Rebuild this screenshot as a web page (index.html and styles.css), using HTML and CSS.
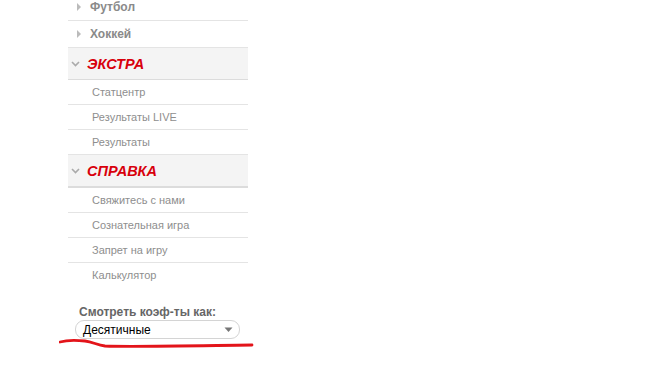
FILE: index.html
```html
<!DOCTYPE html>
<html lang="ru">
<head>
    <meta charset="UTF-8">
    <title>Меню</title>
    <link rel="stylesheet" href="styles.css">
</head>
<body>
    <div class="sidebar">
        <!-- виды спорта -->
        <ul class="sports">
            <li class="sport"><span class="tri"></span>Футбол</li>
            <li class="sport"><span class="tri"></span>Хоккей</li>
        </ul>
        <!-- экстра -->
        <div class="group-head">
            <svg class="chev" width="9" height="6" viewBox="0 0 9 6"><path d="M1 1 L4.5 4.5 L8 1" fill="none" stroke="#aaa" stroke-width="1.6"/></svg>
            ЭКСТРА
        </div>
        <ul class="links">
            <li>Статцентр</li>
            <li>Результаты LIVE</li>
            <li>Результаты</li>
        </ul>
        <!-- справка -->
        <div class="group-head group-head-help">
            <svg class="chev" width="9" height="6" viewBox="0 0 9 6"><path d="M1 1 L4.5 4.5 L8 1" fill="none" stroke="#aaa" stroke-width="1.6"/></svg>
            СПРАВКА
        </div>
        <ul class="links">
            <li>Свяжитесь с нами</li>
            <li>Сознательная игра</li>
            <li>Запрет на игру</li>
            <li class="last">Калькулятор</li>
        </ul>
        <!-- формат коэффициентов -->
        <div class="odds">
            <div class="odds-label">Смотреть коэф-ты как:</div>
            <div class="select">
                <span>Десятичные</span>
                <svg width="9" height="6" viewBox="0 0 9 6"><path d="M0.5 0.5 H8.5 L4.5 5 Z" fill="#777"/></svg>
            </div>
        </div>
    </div>
    <svg class="scribble" width="200" height="14" viewBox="0 0 200 14">
        <path d="M1 4 C8 2, 16 2, 26 3 C34 4, 38 7, 46 8 C70 9, 120 8, 193 7" fill="none" stroke="#e3141a" stroke-width="2.8" stroke-linecap="round"/>
    </svg>
</body>
</html>
```

FILE: styles.css
```css
/* общие */
body {
    margin: 0;
    background: #fff;
    font-family: 'Liberation Sans', Arial, sans-serif;
    position: relative;
    min-height: 368px;
}
ul {
    list-style: none;
    margin: 0;
    padding: 0;
}
.sidebar {
    width: 180px;
    margin: -6px 0 0 68px;
}
/* виды спорта */
.sport {
    height: 26px;
    line-height: 26px;
    border-bottom: 1px solid #e4e4e4;
    font-size: 12px;
    font-weight: bold;
    color: #8a8a8a;
    padding-left: 9px;
    display: flex;
    align-items: center;
}
.tri {
    width: 0;
    height: 0;
    border-left: 4px solid #bbb;
    border-top: 4px solid transparent;
    border-bottom: 4px solid transparent;
    margin-right: 9px;
}
/* заголовки групп */
.group-head {
    height: 31px;
    background: #f4f4f4;
    border-bottom: 1px solid #dcdcdc;
    display: flex;
    align-items: center;
    padding-left: 3px;
    font-size: 14.5px;
    font-weight: bold;
    font-style: italic;
    color: #d8000c;
}
.group-head-help {
    border-bottom-width: 2px;
}
.chev {
    margin-right: 7px;
}
/* ссылки */
.links li {
    height: 24px;
    line-height: 24px;
    border-bottom: 1px solid #e4e4e4;
    font-size: 11px;
    color: #8e8e8e;
    padding-left: 24px;
}
.links li.last {
    border-bottom: none;
}
/* коэффициенты */
.odds {
    margin-top: 18px;
    padding-left: 7px;
}
.odds-label {
    font-size: 12px;
    font-weight: bold;
    color: #666;
    line-height: 14px;
    margin-left: 4px;
}
.select {
    margin-top: 1px;
    height: 17px;
    border: 1px solid #d4d4d4;
    border-radius: 9px;
    display: flex;
    align-items: center;
    justify-content: space-between;
    padding: 0 6px 0 7px;
    box-sizing: content-box;
    width: 150px;
    font-size: 12px;
    color: #000;
}
.scribble {
    position: absolute;
    left: 59px;
    top: 338px;
}
```
